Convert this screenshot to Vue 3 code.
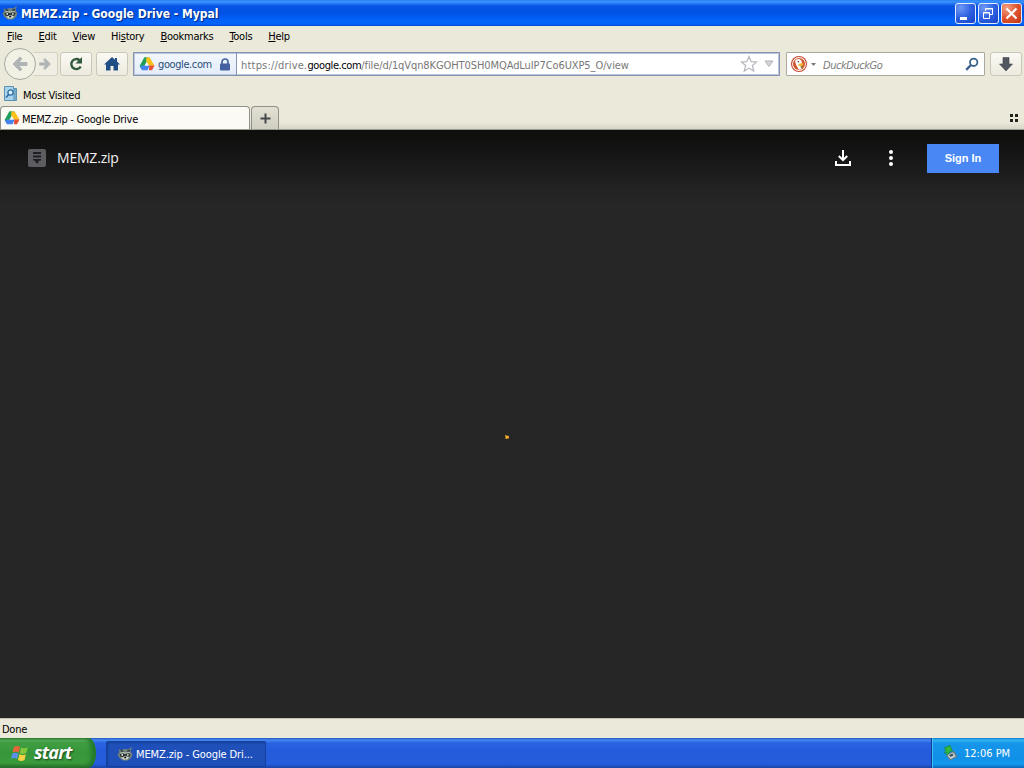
<template>
  <div class="screen">
    <!-- window caption -->
    <header class="titlebar">
      <svg class="coon" viewBox="0 0 16 16"><use href="#raccoon" /></svg>
      <span class="caption">MEMZ.zip - Google Drive - Mypal</span>
      <div class="win-buttons">
        <button class="win"><svg viewBox="0 0 21 21"><path fill="#fff" d="M5 14h7v3H5z" /></svg></button>
        <button class="win">
          <svg viewBox="0 0 21 21" fill="none" stroke="#fff"><path d="M7.500 8V5.500h7v6H12M7 6h8M5.500 9.500h6v6h-6zM5 10h7" /></svg>
        </button>
        <button class="win close"><svg viewBox="0 0 21 21"><path stroke="#fff" stroke-width="2.200" d="M5.500 5.500l10 10M15.500 5.500l-10 10" /></svg></button>
      </div>
    </header>

    <nav class="menubar">
      <span v-for="m in menus" :key="m.key + m.post" class="menu">{{ m.pre }}<u>{{ m.key }}</u>{{ m.post }}</span>
    </nav>

    <div class="navbar">
      <div class="history">
        <button class="back">
          <svg viewBox="0 0 18 18"><path class="dim" d="M2 9l7-7 2 2-3.500 3.500H16v3H7.500L11 14l-2 2z" /></svg>
        </button>
        <button class="forward">
          <svg viewBox="0 0 18 18"><path class="dim" d="M16 9L9 2 7 4l3.500 3.500H2v3h8.500L7 14l2 2z" /></svg>
        </button>
      </div>
      <button class="tool reload">
        <svg viewBox="0 0 16 16"><path fill="none" stroke="#315b3c" stroke-width="2.400" d="M11.500 4.200A5 5 0 1 0 12.700 10.500" /><path fill="#315b3c" d="M14 1v6.500H7.500z" /></svg>
      </button>
      <button class="tool home">
        <svg viewBox="0 0 16 16"><path fill="#204e85" d="M8 1L0 8.500h2V14.500h4.500V10h3v4.500H14V8.500h2L13 5.600V2h-2v1.800z" /></svg>
      </button>

      <div class="urlbar">
        <div class="identity">
          <svg class="drive" viewBox="0 0 16 16"><use href="#drive" /></svg>
          <span class="host">google.com</span>
          <svg class="lock" viewBox="0 0 12 13"><path fill="none" stroke="#4866a4" stroke-width="1.700" d="M3 7V4a3 3 0 0 1 6 0v3" /><rect x="1" y="5.500" width="10" height="7" rx="1" fill="#4461a2" /></svg>
        </div>
        <span class="url"><span class="scheme">https://drive.</span><b>google.com</b>/file/d/1qVqn8KGOHT0SH0MQAdLuIP7Co6UXP5_O/view</span>
        <svg class="star" viewBox="0 0 18 18"><path fill="#fff" stroke="#b4b7bd" stroke-width="1.200" d="M9 1.500l2.100 5.100 5.500.4-4.200 3.500 1.400 5.600L9 13.100l-4.800 3 1.400-5.600L1.400 7l5.500-.4z" /></svg>
        <svg class="drop" viewBox="0 0 10 8"><path fill="#d5d7db" stroke="#b0b4bb" d="M1 1h8L5 6.500z" /></svg>
      </div>

      <div class="searchbar">
        <svg class="duck" viewBox="0 0 16 16">
          <circle cx="8" cy="8" r="8" fill="#c9472b" /><circle cx="8" cy="8" r="6.900" fill="#fff" /><circle cx="8" cy="8" r="6" fill="#d2552c" />
          <path fill="#fff" d="M4 5c1-2.500 5-2.800 6.500-.2l.5 3-1.500 2 1 3.200c-1 .6-2 .6-3 .2L5 8.500z" /><path fill="#f5b82e" d="M7.500 8c2-1.200 5-1 5 .2S10 10.300 7.500 9.800z" /><circle cx="7.300" cy="5.800" r=".8" fill="#5a3a2a" /><path fill="#6aa63a" d="M9 11l2.500-.5v2z" />
        </svg>
        <svg class="engine-arrow" viewBox="0 0 5 3"><path fill="#777" d="M0 0h5L2.500 3z" /></svg>
        <span class="engine">DuckDuckGo</span>
        <svg class="magnifier" viewBox="0 0 14 14"><circle cx="8.700" cy="5.300" r="3.700" fill="none" stroke="#3b638e" stroke-width="1.800" /><path stroke="#3b638e" stroke-width="2.400" d="M6 8l-4.800 4.800" /></svg>
      </div>

      <button class="tool downloads">
        <svg viewBox="0 0 16 16"><path fill="#535860" stroke="#3d4249" stroke-width=".6" d="M5 1.500h6V8h3.500L8 15 1.500 8H5z" /></svg>
      </button>
    </div>

    <div class="bookmarks">
      <svg viewBox="0 0 15 16"><path fill="#75a9c8" stroke="#5c91b3" d="M1.500.5h9v2h3v12h-12z" /><path fill="#a8d4ec" d="M2 1h8v13H2z" /><circle cx="7.500" cy="6.500" r="2.600" fill="#d8f0fb" stroke="#2e6d9f" stroke-width="1.300" /><path stroke="#2e6d9f" stroke-width="1.600" d="M5.700 8.500L3 11.500" /></svg>
      <span>Most Visited</span>
    </div>

    <div class="tabs">
      <div class="tab">
        <svg class="drive" viewBox="0 0 16 16"><use href="#drive" /></svg>
        <span>MEMZ.zip - Google Drive</span>
      </div>
      <button class="new-tab"><svg viewBox="0 0 11 11"><path fill="#45484b" d="M4.500 0.500h2v4h4v2h-4v4h-2v-4h-4v-2h4z" /></svg></button>
      <svg class="groups" viewBox="0 0 8 8"><path fill="#22221d" d="M0 0h3v3H0zM5 0h3v3H5zM0 5h3v3H0zM5 5h3v3H5z" /></svg>
    </div>

    <main class="viewer">
      <div class="viewer-bar">
        <svg class="archive" viewBox="0 0 18 18"><rect width="18" height="18" rx="2" fill="#5d5c60" /><path fill="#202024" d="M5 3h8v2H5zM5 6.500h8v2H5zM5 10h8v1.500h-1.500L9 15l-2.500-3.500H5z" /></svg>
        <span class="filename">MEMZ.zip</span>
        <svg class="save" viewBox="0 0 16 16" fill="none" stroke="#fff" stroke-width="2"><path d="M8 0v10M3.800 6L8 10.200 12.200 6M1 11v4h14v-4" /></svg>
        <svg class="more" viewBox="0 0 4 16" fill="#fff"><circle cx="2" cy="2" r="2" /><circle cx="2" cy="8" r="2" /><circle cx="2" cy="14" r="2" /></svg>
        <button class="sign-in">Sign In</button>
      </div>
      <div class="loading"><svg viewBox="0 0 6 6"><path fill="#d9981f" d="M1 1l4 1v2.500L1.500 5z" /><path fill="#f2b03a" d="M2 2h2v2H2z" /></svg></div>
    </main>

    <div class="statusbar">Done</div>

    <footer class="taskbar">
      <button class="start">
        <svg viewBox="0 0 18 17">
          <path fill="#e8653a" d="M3 2c2-1.500 4-1.300 6 0L7.700 7.500C5.700 6.400 3.700 6.400 1.500 7.600z" /><path fill="#83c83c" d="M10 2.600c2.200 1.100 4.300 1 6.800-.4L15.200 8c-2.200 1.200-4.300 1.200-6.500.2z" />
          <path fill="#5b8ff0" d="M1.200 8.700c2.200-1.300 4.200-1.200 6.200-.1L6 14c-2-1.200-4-1.200-6 .1z" /><path fill="#f8d243" d="M8.400 9.300c2.200 1 4.200 1 6.500-.1L13.500 15c-2.300 1.300-4.400 1.200-6.500 0z" />
        </svg>
        <span>start</span>
      </button>
      <button class="task">
        <svg class="coon" viewBox="0 0 16 16"><use href="#raccoon" /></svg>
        <span>MEMZ.zip - Google Dri...</span>
      </button>
      <div class="tray">
        <svg viewBox="0 0 15 16"><path fill="#707f86" d="M3 10l8-4 3.500 5.500L7 15.500z" /><path fill="#cfdadd" d="M4.500 10L10 7.500l2.500 3.700L7.500 14z" /><path fill="#3c5360" d="M6 10l3.500-1.500 1 2L7.500 12z" /><path fill="#32b83e" stroke="#187d2a" stroke-width=".6" d="M1 3l6-2.500 2.500 6-2-.5L4 10.500l-.5-3L1 8l2-3z" /></svg>
        <span>12:06 PM</span>
      </div>
    </footer>

    <svg class="defs">
      <symbol id="drive" viewBox="0 0 16 16">
        <path fill="#1e9e58" d="M5.300 1.500H8L7 7l-4 6.500L.6 9.900z" /><path fill="#2ba65a" d="M5.300 1.500h5.400L8 6.500z" /><path fill="#fbc116" d="M7.500 1.500h3.200l4.800 8.300h-5.500L7 4.500z" />
        <path fill="#4384ef" d="M3.500 9.500h7.300l-2.300 4.700H3L.8 10.500z" /><path fill="#ea5037" d="M10.200 9.500h5.300L13 14.200h-3z" /><path fill="#fff" d="M8 6.800l1.600 2.700H6.400z" />
      </symbol>
      <symbol id="raccoon" viewBox="0 0 16 16">
        <path fill="#75827a" d="M1.500 3.500l3 .5L8 3l3 .5L15 1l-1.500 4L15.500 8.500 14 12l-3 2.500H6L2.500 12 .5 8.500 2.500 6z" />
        <path fill="#2c3836" d="M3.500 3.500L7 5.500 6 6.500 3.500 5zM13 3.500L9.500 5l.5 1 3-.5z" />
        <path fill="#a9b3a9" d="M3.500 6.200L7 5.700l1 .8 1.500-.8 3.500.3v.8L8 7.800l-5-.4z" />
        <path fill="#202c2b" d="M2.500 8.200l3.500-.8 2 1.200 2-1.200 3.500.6-1.200 2.500-2.300.6L8 9.700 6 11.300l-2.500-.8z" />
        <circle cx="5.200" cy="9" r=".9" fill="#e3e9e2" /><circle cx="10.800" cy="8.900" r=".9" fill="#e3e9e2" />
        <path fill="#d5dbd0" d="M8 9.700l4 1.600-2 2.200H6.500l-2.500-2 2-.2z" /><circle cx="8.200" cy="11.500" r="1.100" fill="#111" />
      </symbol>
    </svg>
  </div>
</template>

<script setup>
const menus = [
  { pre: '', key: 'F', post: 'ile' },
  { pre: '', key: 'E', post: 'dit' },
  { pre: '', key: 'V', post: 'iew' },
  { pre: 'Hi', key: 's', post: 'tory' },
  { pre: '', key: 'B', post: 'ookmarks' },
  { pre: '', key: 'T', post: 'ools' },
  { pre: '', key: 'H', post: 'elp' },
]
</script>

<style>
body { overflow: hidden; }
</style>

<style scoped>
.screen {
  width: 1024px;
  height: 768px;
  display: flex;
  flex-direction: column;
  background: #ebe9d9;
  color: #000;
  font: 11px "DejaVu Sans Condensed", "DejaVu Sans", sans-serif;
  font-stretch: condensed;
  letter-spacing: -.25px;
  white-space: nowrap;
}
.screen *, .screen { box-sizing: border-box; }
svg { display: block; flex: none; }
button { font: inherit; letter-spacing: inherit; padding: 0; margin: 0; flex: none; }
.defs { display: none; }
.coon { width: 16px; height: 16px; }
.drive { width: 16px; height: 16px; }

/* caption */
.titlebar {
  height: 26px;
  flex: none;
  display: flex;
  align-items: center;
  padding: 0 2px;
  background: linear-gradient(#2b83f8 0, #3a91ff 2px, #0755e5 6px, #0053e4 13px, #0262fb 20px, #0264fb 24px, #0045d0);
}
.caption {
  margin: 1px 0 0 3px;
  color: #fff;
  font-size: 12px;
  font-weight: 700;
  letter-spacing: 0;
  text-shadow: 1px 1px 1px #062a82;
}
.win-buttons { margin-left: auto; display: flex; gap: 2px; }
.win {
  width: 21px;
  height: 21px;
  border: 1px solid #e5eeff;
  border-radius: 3px;
  background: radial-gradient(circle at 25% 20%, #6e98f5, #2e62e2 50%, #1740c4);
}
.win svg { width: 21px; height: 21px; margin: -1px; }
.close { background: radial-gradient(circle at 25% 20%, #f2a085, #e1552f 50%, #bd3413); }

/* menu */
.menubar {
  height: 20px;
  flex: none;
  display: flex;
  align-items: center;
  gap: 16px;
  padding-left: 7px;
  letter-spacing: -.26px;
}
.menu u { text-underline-offset: 1px; }

/* navigation toolbar */
.navbar {
  height: 36px;
  flex: none;
  display: flex;
  align-items: center;
  padding: 0 2px 0 4px;
}
.history { display: flex; align-items: center; width: 54px; }
.back {
  width: 32px;
  height: 32px;
  border: 1px solid #a9a89f;
  border-radius: 50%;
  background: #f2f1e6;
  z-index: 1;
}
.back svg { width: 18px; height: 18px; margin: 0 auto; }
.forward {
  width: 24px;
  height: 24px;
  margin-left: -2px;
  border: 1px solid #d4d2c2;
  border-left: 0;
  border-radius: 0 3px 3px 0;
  background: #f0eee2;
}
.forward svg { width: 14px; height: 14px; margin-left: 4px; }
.dim { fill: #b1b6b8; stroke: #989ea1; stroke-width: .6; }
.tool {
  width: 32px;
  height: 24px;
  border: 1px solid #c9c7b8;
  border-radius: 3px;
  background: linear-gradient(#faf9f3, #edebdf);
}
.tool svg { width: 16px; height: 16px; margin: 0 auto; }
.reload { margin-left: 2px; }
.home { margin-left: 4px; }
.urlbar {
  width: 647px;
  height: 24px;
  margin-left: 5px;
  display: flex;
  align-items: center;
  border: 1px solid #8494b0;
  box-shadow: inset 0 0 0 1px #bac7dd;
  background: #fff;
}
.identity {
  width: 103px;
  height: 22px;
  display: flex;
  align-items: center;
  padding-left: 5px;
  border-right: 1px solid #8394b4;
  background: linear-gradient(#f3f7fd, #e3ecf9);
  box-shadow: inset 1px 1px #bac7dd, inset 0 -1px #bac7dd;
}
.host { width: 54px; margin: 1px 0 0 3px; color: #294d7b; letter-spacing: -.4px; }
.lock { width: 12px; height: 13px; margin-left: 7px; }
.url { margin: 2px 0 0 4px; color: #777; letter-spacing: -.09px; }
.scheme { letter-spacing: .2px; }
.url b { font-weight: 400; color: #000; letter-spacing: -.4px; }
.star { width: 18px; height: 18px; margin-left: auto; }
.drop { width: 10px; height: 8px; margin: 0 5px 0 6px; }
.searchbar {
  width: 199px;
  height: 24px;
  margin-left: 6px;
  display: flex;
  align-items: center;
  padding: 0 5px 0 4px;
  border: 1px solid #aaa99f;
  border-radius: 1px;
  background: #fff;
}
.duck { width: 16px; height: 16px; }
.engine-arrow { width: 5px; height: 3px; margin-left: 4px; }
.engine { margin: 2px 0 0 7px; color: #7c7c7c; font-style: italic; letter-spacing: -.45px; }
.magnifier { width: 14px; height: 14px; margin-left: auto; }
.downloads { margin-left: 5px; }

.bookmarks {
  height: 23px;
  flex: none;
  display: flex;
  align-items: center;
  gap: 5px;
  padding: 3px 0 0 3px;
  letter-spacing: -.25px;
}
.bookmarks svg { width: 15px; height: 16px; margin-top: -2px; }

/* tabs */
.tabs {
  height: 25px;
  flex: none;
  display: flex;
  align-items: flex-end;
  background: linear-gradient(#ebe9d9 70%, #d8d6c8);
  border-bottom: 1px solid #9b9a91;
}
.tab {
  width: 250px;
  height: 23px;
  display: flex;
  align-items: center;
  gap: 2px;
  padding-left: 4px;
  border: 1px solid #929187;
  border-bottom: 0;
  border-radius: 4px 4px 0 0;
  background: #fcfaf5;
}
.tab .drive { margin-left: -1px; }
.tab span { margin-top: 2px; }
.new-tab {
  width: 28px;
  height: 23px;
  margin-left: 1px;
  border: 1px solid #929187;
  border-bottom: 0;
  border-radius: 4px 4px 0 0;
  background: linear-gradient(#e2e0d3, #d0cfc1);
}
.new-tab svg { width: 11px; height: 11px; margin: 0 auto; }
.groups { width: 8px; height: 8px; margin: 0 6px 7px auto; }

/* drive viewer */
.viewer {
  flex: 1;
  display: flex;
  flex-direction: column;
  background: linear-gradient(#0e0e0c 0, #121212 16px, #1a1a1a 36px, #222 56px, #262626 76px);
}
.viewer-bar {
  height: 56px;
  display: flex;
  align-items: center;
  padding: 0 25px 0 28px;
}
.archive { width: 18px; height: 18px; }
.filename { margin: -1px 0 0 11px; color: #f2f2f2; font: 14px "Open Sans", "Noto Sans", sans-serif; letter-spacing: -.2px; }
.save { width: 16px; height: 16px; margin-left: auto; }
.more { width: 4px; height: 16px; margin-left: 38px; }
.sign-in {
  width: 72px;
  height: 29px;
  margin: 1px 0 0 34px;
  padding-bottom: 2px;
  border: 0;
  background: #4988f4;
  color: #fff;
  font: 700 11px "Liberation Sans", Arial, sans-serif;
  letter-spacing: 0;
}
.loading {
  flex: 1;
  display: flex;
  align-items: center;
  justify-content: center;
  padding: 0 10px 42px 0;
}
.loading svg { width: 6px; height: 6px; margin-top: 12px; }

.statusbar {
  height: 20px;
  flex: none;
  padding: 0 2px;
  border-top: 1px solid #c5c3b5;
  line-height: 21px;
}

/* taskbar */
.taskbar {
  height: 30px;
  flex: none;
  display: flex;
  background: linear-gradient(#2356bf 0, #4487f2 2px, #2863e2 5px, #245bdc 12px, #245edc 26px, #1b44a6);
}
.start {
  width: 96px;
  display: flex;
  align-items: center;
  padding-left: 11px;
  border: 0;
  border-radius: 0 8px 8px 0 / 0 15px 15px 0;
  background: linear-gradient(#327a34 0, #5cb160 2px, #409d42 5px, #35973a 15px, #3b9b3c 25px, #276a2b);
  box-shadow: inset -4px 0 5px #22752a;
  color: #fff;
}
.start svg { width: 18px; height: 17px; }
.start span {
  margin: -2px 0 0 5px;
  font: italic 700 18px "Open Sans", "Noto Sans", sans-serif;
  letter-spacing: -.8px;
  text-shadow: 1px 1px 2px #174619;
}
.task {
  width: 160px;
  height: 26px;
  margin: 3px 0 0 10px;
  display: flex;
  align-items: center;
  gap: 3px;
  padding-left: 10px;
  border: 1px solid #15409b;
  border-radius: 2px;
  background: #1f50b9;
  box-shadow: inset 1px 1px 2px #173f99;
  color: #fff;
  letter-spacing: -.1px;
}
.tray {
  width: 93px;
  margin-left: auto;
  display: flex;
  align-items: center;
  padding-left: 11px;
  border-left: 1px solid #103e92;
  background: linear-gradient(#0d74c9 0, #35b8f4 2px, #1596ea 5px, #1190e8 20px, #129aef 26px, #0d65b6);
  box-shadow: inset 1px 0 #43bdf5;
  color: #fff;
}
.tray svg { width: 15px; height: 16px; }
.tray span { margin-left: 6px; letter-spacing: 0; }
</style>
